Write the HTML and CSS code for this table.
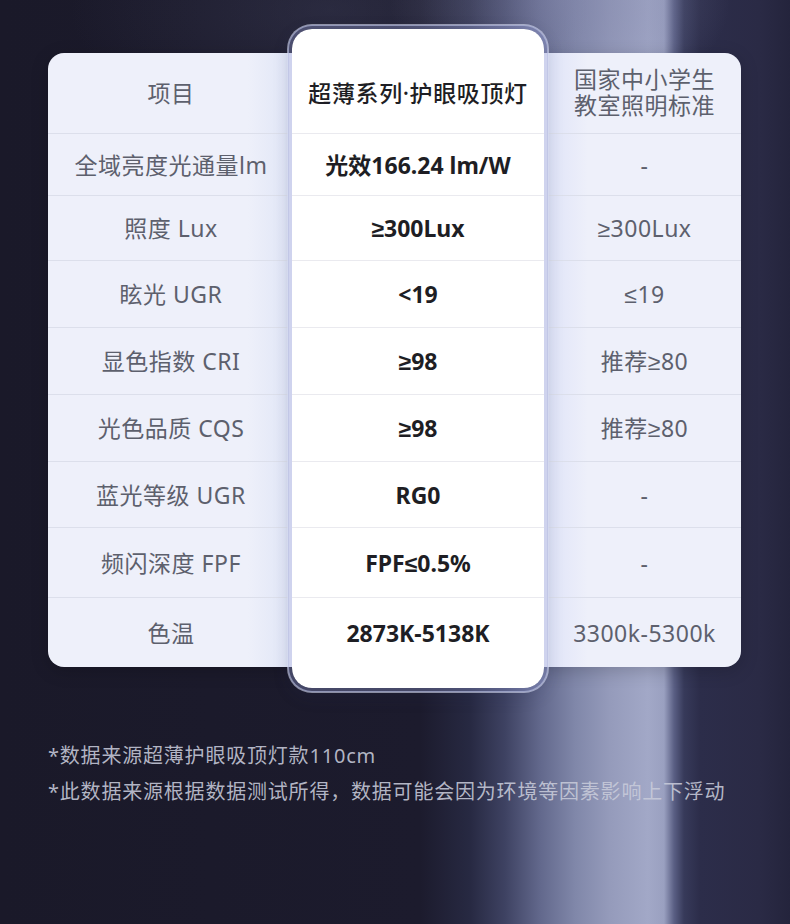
FILE: index.html
```html
<!DOCTYPE html>
<html lang="zh-CN">
<head>
<meta charset="utf-8">
<title>超薄系列·护眼吸顶灯 参数对比</title>
<link rel="stylesheet" href="styles.css">
</head>
<body>
<div class="page">
  <div class="table">
    <div class="col col-left">
      <div class="cell head">项目</div>
      <div class="cell">全域亮度光通量lm</div>
      <div class="cell">照度 Lux</div>
      <div class="cell">眩光 UGR</div>
      <div class="cell">显色指数 CRI</div>
      <div class="cell">光色品质 CQS</div>
      <div class="cell">蓝光等级 UGR</div>
      <div class="cell">频闪深度 FPF</div>
      <div class="cell">色温</div>
    </div>
    <div class="col col-mid">
      <div class="cell head">超薄系列·护眼吸顶灯</div>
      <div class="cell">光效166.24 lm/W</div>
      <div class="cell">≥300Lux</div>
      <div class="cell">&lt;19</div>
      <div class="cell">≥98</div>
      <div class="cell">≥98</div>
      <div class="cell">RG0</div>
      <div class="cell">FPF≤0.5%</div>
      <div class="cell">2873K-5138K</div>
    </div>
    <div class="col col-right">
      <div class="cell head">国家中小学生<br>教室照明标准</div>
      <div class="cell">-</div>
      <div class="cell">≥300Lux</div>
      <div class="cell">≤19</div>
      <div class="cell">推荐≥80</div>
      <div class="cell">推荐≥80</div>
      <div class="cell">-</div>
      <div class="cell">-</div>
      <div class="cell">3300k-5300k</div>
    </div>
  </div>
  <div class="notes">
    <p>*数据来源超薄护眼吸顶灯款110cm</p>
    <p>*此数据来源根据数据测试所得，数据可能会因为环境等因素影响上下浮动</p>
  </div>
</div>
</body>
</html>
```

FILE: styles.css
```css
* { box-sizing: border-box; }

html, body {
  margin: 0;
  padding: 0;
}

body {
  width: 790px;
  height: 924px;
  overflow: hidden;
  font-family: "Noto Sans", "Liberation Sans", "Noto Sans CJK SC", sans-serif;
  background:
    radial-gradient(ellipse 170px 110px at 560px 0px, rgba(130,134,170,0.55), rgba(130,134,170,0) 100%),
    radial-gradient(ellipse 260px 120px at 330px 10px, rgba(70,72,100,0.35), rgba(70,72,100,0) 100%),
    linear-gradient(90deg,
      #1a1929 0px,
      #1c1b2d 420px,
      #272942 470px,
      #3e4262 505px,
      #62688c 540px,
      #8087a9 575px,
      #959bbb 610px,
      #a2a8c7 648px,
      #9aa0c0 664px,
      #5a5f84 674px,
      #373a5a 684px,
      #2c2d4a 700px,
      #2a2a45 760px,
      #24243c 790px);
}

.page {
  padding: 53px 0 0 48px;
}

.table {
  display: flex;
  align-items: flex-start;
  width: 693px;
  background: #eef0fa;
  border-radius: 16px;
  box-shadow: 0 4px 18px rgba(0, 0, 0, 0.18);
}

.col {
  display: grid;
  grid-template-rows: 80px 62px 65px 67px 67px 67px 66px 70px 70px;
}

.cell {
  display: flex;
  align-items: center;
  justify-content: center;
  text-align: center;
  font-size: 23px;
  letter-spacing: 0.5px;
  line-height: 26px;
  color: #5d606d;
  border-top: 1px solid #dcdfeb;
}

.cell.head {
  border-top: none;
}

.col-left {
  width: 240px;
  border-radius: 16px 0 0 16px;
  background: linear-gradient(90deg, rgba(238,240,250,0) 0px, rgba(238,240,250,0) 200px, #e2e7f7 236px, #dce2f5 240px);
}

.col-left .cell {
  padding-left: 6px;
}

.col-right {
  width: 193px;
  border-radius: 0 16px 16px 0;
  background: linear-gradient(90deg, #dde2f6 0px, #e6e9f9 18px, rgba(238,240,250,0) 40px);
}

.col-right .cell.head {
  padding-bottom: 2px;
}

.col-mid {
  width: 260px;
  margin: -28px 0 -25px;
  padding: 24px 0 21px;
  background: #ffffff;
  background-clip: padding-box;
  border: 4px solid rgba(150, 158, 215, 0.35);
  border-radius: 24px;
  box-shadow: 0 0 0 1px rgba(215, 220, 242, 0.6), 0 6px 16px rgba(40, 44, 90, 0.15);
  position: relative;
  z-index: 1;
}

.col-mid .cell {
  color: #1e1e24;
  font-weight: 700;
  letter-spacing: 0;
  border-top-color: #eaeaef;
}

.col-mid .cell.head {
  font-weight: 500;
  letter-spacing: 0.6px;
}

.notes {
  margin-top: 71px;
  font-size: 20px;
  letter-spacing: 0.8px;
  line-height: 36px;
  color: rgba(200, 203, 218, 0.88);
}

.notes p {
  margin: 0;
  white-space: nowrap;
}
```
